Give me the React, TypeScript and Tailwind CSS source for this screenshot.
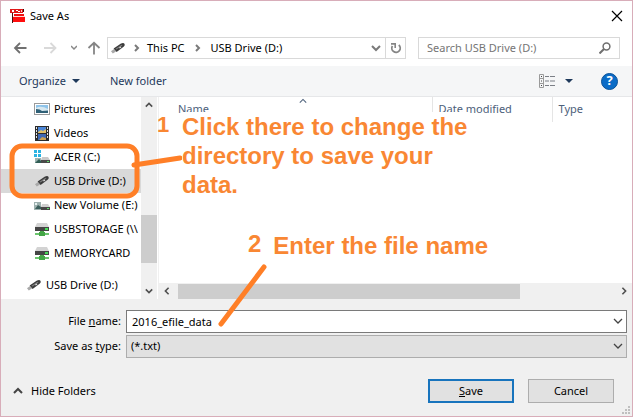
import React, { useState } from 'react';

interface IconProps {
  className?: string;
}

interface TreeItem {
  id: string;
  label: string;
  icon: React.FC<IconProps>;
  root?: boolean;
}

const AppIcon: React.FC<IconProps> = ({ className }) => (
  <svg className={className} width="16" height="16" viewBox="0 0 16 16" aria-hidden="true">
    <path d="M3 4h1v11H3z" fill="#4a0d0d" />
    <path d="M1 1h13v4H1z" fill="#e01818" />
    <path d="M3 2h2v2H3zM7 2h2v1H7zM9 3h2v1H9z" fill="#fff" />
    <path d="M12 2h1v2h-1z" fill="#f9c9c9" />
    <path d="M14 1h1v3h-1z" fill="#3a0808" />
    <path d="M5 6h10v2H5z" fill="#f01010" />
    <path d="M4 8h12v1H4z" fill="#ffd9d9" />
    <path d="M4 9h12v5H4z" fill="#ff0d0d" />
  </svg>
);

const UsbIcon: React.FC<IconProps> = ({ className }) => (
  <svg className={className} width="16" height="16" viewBox="0 0 16 16" aria-hidden="true">
    <path d="M1 11.2 4 9l2 2.6-3.2 1.8z" fill="#a9a9a9" />
    <path d="M3.6 8.6 11 3.6q2.6-1.2 3.6.4.6 1.6-1 2.8L6.6 12z" fill="#3b3b3b" />
    <path d="M5.5 8.8 11.5 4.8l1 .6-6 4z" fill="#7d7d7d" />
    <path d="m9 7.4 1.6-1 .8 1-1.6 1z" fill="#d8d8d8" />
  </svg>
);

const PicturesIcon: React.FC<IconProps> = ({ className }) => (
  <svg className={className} width="16" height="16" viewBox="0 0 16 16" aria-hidden="true">
    <rect x=".5" y="2.5" width="15" height="11" fill="#fff" stroke="#9a9a9a" />
    <path d="M2 4h12v5H2z" fill="#8fc4ea" />
    <path d="M2 7q5-3 12 1v2H2z" fill="#d7e8f0" />
    <path d="M2 8q4 0 6 2l6-.6V12H2z" fill="#2f6076" />
  </svg>
);

const VideosIcon: React.FC<IconProps> = ({ className }) => (
  <svg className={className} width="16" height="16" viewBox="0 0 16 16" aria-hidden="true">
    <rect x="1" y="1" width="14" height="15" fill="#2c2c2c" />
    <path d="M4 2h8v6H4z" fill="#4b86d8" />
    <path d="M4 9h8v6H4z" fill="#3e68b3" />
    <path d="M4 7l3-2 2 1 3-2v4H4z" fill="#dfc06a" />
    <path d="M5 15l3-3 4 1v2z" fill="#c9a052" />
    <path
      d="M2 2h1v2H2zM2 5h1v2H2zM2 8h1v2H2zM2 11h1v2H2zM13 2h1v2h-1zM13 5h1v2h-1zM13 8h1v2h-1zM13 11h1v2h-1z"
      fill="#e4e4e4"
    />
  </svg>
);

const SystemDriveIcon: React.FC<IconProps> = ({ className }) => (
  <svg className={className} width="16" height="16" viewBox="0 0 16 16" aria-hidden="true">
    <path d="M0 1h3v3H0zM4 1h3v3H4zM0 5h3v3H0zM4 5h3v3H4z" fill="#2bb3e2" />
    <path d="M1 9h6v5H1z" fill="#9db4b2" />
    <path d="m1 14 4-4 2 2v2z" fill="#315e55" />
    <path d="M8 8h6l2 3H7z" fill="#c9c9c9" />
    <path d="M7 11h9v3H7z" fill="#4a4a4a" />
    <path d="M13 12h2v1h-2z" fill="#5fe06c" />
  </svg>
);

const VolumeIcon: React.FC<IconProps> = ({ className }) => (
  <svg className={className} width="16" height="16" viewBox="0 0 16 16" aria-hidden="true">
    <path d="M0 5h7v8H0z" fill="#9db0ae" />
    <path d="m1 12 3-4 3 2v2z" fill="#3c5f5c" />
    <path d="M1 6h2v2H1z" fill="#e8f1f1" />
    <path d="M8 7h6l2 3H7z" fill="#cfcfcf" />
    <path d="M7 10h9v3H7z" fill="#474747" />
    <path d="M13 11h2v1h-2z" fill="#5fe06c" />
  </svg>
);

const NetworkDriveIcon: React.FC<IconProps> = ({ className }) => (
  <svg className={className} width="16" height="16" viewBox="0 0 16 16" aria-hidden="true">
    <path d="M3 2h10l2 4H1z" fill="#d3d3d3" />
    <path d="M1 6h14v4H1z" fill="#454545" />
    <path d="M11 7h3v2h-3z" fill="#46dc58" />
    <path d="M6 10h4v2H6z" fill="#49a64b" />
    <path d="M1 12h14v2H1z" fill="#6cc46e" />
    <path d="M5 11h6v4H5z" fill="#43a646" />
  </svg>
);

const Chevron: React.FC<IconProps & { d: string; thick?: boolean }> = ({ className, d, thick }) => (
  <svg
    className={className}
    width="10"
    height="10"
    viewBox="0 0 10 10"
    fill="none"
    stroke="currentColor"
    strokeWidth={thick ? 2 : 1.3}
    aria-hidden="true"
  >
    <path d={d} />
  </svg>
);

const UP = 'M1 7l4-4 4 4';
const DOWN = 'M1 3l4 4 4-4';
const LEFT = 'M7 1L3 5l4 4';
const RIGHT = 'M3 1l4 4-4 4';
const CRUMB = 'M3 2l3 3-3 3';

const Caret: React.FC = () => (
  <svg width="8" height="4" viewBox="0 0 8 4" fill="#1e395b" aria-hidden="true">
    <path d="M0 0h8L4 4z" />
  </svg>
);

const treeItems: TreeItem[] = [
  { id: 'pictures', label: 'Pictures', icon: PicturesIcon },
  { id: 'videos', label: 'Videos', icon: VideosIcon },
  { id: 'c', label: 'ACER (C:)', icon: SystemDriveIcon },
  { id: 'd', label: 'USB Drive (D:)', icon: UsbIcon },
  { id: 'e', label: 'New Volume (E:)', icon: VolumeIcon },
  { id: 'usbstorage', label: 'USBSTORAGE (\\\\', icon: NetworkDriveIcon },
  { id: 'memorycard', label: 'MEMORYCARD', icon: NetworkDriveIcon },
  { id: 'usb', label: 'USB Drive (D:)', icon: UsbIcon, root: true },
];

const TitleBar: React.FC = () => (
  <header className="flex h-[30px] items-center bg-white pl-2 pr-[9px]">
    <AppIcon />
    <h1 className="ml-[5px] flex-1">Save As</h1>
    <button type="button" aria-label="Close">
      <svg width="12" height="12" viewBox="0 0 12 12" stroke="#000" strokeWidth="1.2" aria-hidden="true">
        <path d="M1 1l10 10M11 1L1 11" />
      </svg>
    </button>
  </header>
);

const NavigationBar: React.FC = () => (
  <nav className="flex items-center bg-white pb-[7px] pl-3 pr-3 pt-1.5 text-[#7a7a7a]">
    <button type="button" aria-label="Back">
      <svg width="14" height="14" viewBox="0 0 14 14" fill="none" stroke="#707070" strokeWidth="1.8" aria-hidden="true">
        <path d="M13.5 7H2M7 2L2 7l5 5" />
      </svg>
    </button>
    <button type="button" aria-label="Forward" className="ml-4">
      <svg width="14" height="14" viewBox="0 0 14 14" fill="none" stroke="#d9d9d9" strokeWidth="1.8" aria-hidden="true">
        <path d="M1 7h11.5M7.5 2l5 5-5 5" />
      </svg>
    </button>
    <button type="button" aria-label="Recent locations" className="ml-3.5">
      <svg width="6" height="6" viewBox="0 0 6 6" fill="none" stroke="#888" strokeWidth="1.5" aria-hidden="true">
        <path d="M0 1l3 3 3-3" />
      </svg>
    </button>
    <button type="button" aria-label="Up" className="ml-2.5">
      <svg width="14" height="14" viewBox="0 0 14 14" fill="none" stroke="#858585" strokeWidth="1.8" aria-hidden="true">
        <path d="M7 13.5V2M1.5 7L7 1.8 12.5 7" />
      </svg>
    </button>
    <div className="ml-1.5 flex h-[22px] flex-1 items-center border border-[#d9d9d9]">
      <UsbIcon className="ml-0.5" />
      <Chevron d={CRUMB} thick className="ml-1.5" />
      <button type="button" className="ml-[5px] text-black">
        This PC
      </button>
      <Chevron d={CRUMB} thick className="ml-2" />
      <button type="button" className="ml-2 text-black">
        USB Drive (D:)
      </button>
      <button type="button" aria-label="Previous locations" className="ml-auto mr-1">
        <Chevron d={DOWN} thick />
      </button>
      <button
        type="button"
        aria-label="Refresh"
        className="flex h-full w-5 items-center justify-center border-l border-[#d9d9d9]"
      >
        <svg width="12" height="12" viewBox="0 0 12 12" fill="none" stroke="#858585" strokeWidth="1.8" aria-hidden="true">
          <path d="M8.8 3a4.2 4.2 0 1 1-6.4 1" />
          <path d="M1 1.9h4.2V6" strokeWidth="1.6" />
        </svg>
      </button>
    </div>
    <label className="ml-3 flex h-[22px] w-[202px] items-center border border-[#d9d9d9] pl-2 pr-2">
      <input
        type="search"
        aria-label="Search"
        placeholder="Search USB Drive (D:)"
        className="min-w-0 flex-1 outline-none placeholder:text-[#757575]"
      />
      <svg width="12" height="12" viewBox="0 0 12 12" fill="none" stroke="#6f6f6f" aria-hidden="true">
        <circle cx="7.5" cy="4.5" r="3.4" strokeWidth="1.5" />
        <path d="M5 7l-4.5 4.5" strokeWidth="2" />
      </svg>
    </label>
  </nav>
);

const Toolbar: React.FC = () => (
  <div className="flex h-[31px] items-center border-b border-[#e6e7e9] bg-[#f5f6f7] pl-[18px] pr-3.5 text-[#1e395b]">
    <button type="button" className="flex items-center gap-1.5">
      Organize
      <Caret />
    </button>
    <button type="button" className="ml-[30px]">
      New folder
    </button>
    <button type="button" aria-label="Change your view" className="ml-auto flex items-center gap-2.5">
      <svg width="16" height="14" viewBox="0 0 16 14" fill="none" aria-hidden="true">
        <path d="M.5.5h4v13h-4zM.5 4.5h4M.5 9.5h4" stroke="#9a9a9a" />
        <path d="M2 2h1v1H2zM2 6.5h1v1H2zM2 11h1v1H2z" fill="#444" />
        <path d="M6 2.5h4M11 2.5h5M6 7h4M11 7h5M6 11.5h4M11 11.5h5" stroke="#7b7f86" />
      </svg>
      <Caret />
    </button>
    <button
      type="button"
      aria-label="Help"
      className="ml-7 flex size-[17px] items-center justify-center rounded-full border border-[#0a5298] bg-[#0b6cc7] text-[13px] font-bold text-white"
    >
      ?
    </button>
  </div>
);

interface FolderTreeProps {
  selected: string;
  onSelect: (id: string) => void;
}

const FolderTree: React.FC<FolderTreeProps> = ({ selected, onSelect }) => (
  <aside className="flex w-[158px] shrink-0 border-r border-[#f0f0f0] bg-white">
    <ul className="w-[140px] overflow-hidden whitespace-nowrap pb-0.5">
      {treeItems.map(({ id, label, icon: Icon, root }) => (
        <li key={id} className={root ? 'mt-2' : ''}>
          <button
            type="button"
            onClick={() => onSelect(id)}
            className={`flex h-6 w-full items-center gap-1 ${root ? 'pl-[25px]' : 'pl-[33px]'} ${
              selected === id ? 'bg-[#d9d9d9]' : ''
            }`}
          >
            <Icon className="shrink-0" />
            {label}
          </button>
        </li>
      ))}
    </ul>
    <div className="flex w-4 flex-col items-center bg-[#f0f0f0] text-[#505050]">
      <Chevron d={UP} thick className="mt-1 size-2" />
      <div className="mt-auto h-12 w-full bg-[#cdcdcd]" />
      <Chevron d={DOWN} thick className="mb-1 mt-6 size-2" />
    </div>
  </aside>
);

const FileList: React.FC = () => (
  <section className="relative flex min-w-0 flex-1 flex-col bg-white">
    <table className="w-full table-fixed text-left text-[#4c607a]">
      <thead>
        <tr className="h-[25px]">
          <th className="relative pl-[19px] font-normal">
            Name
            <Chevron d={UP} className="absolute left-1/2 top-0 ml-1 size-2" />
          </th>
          <th className="w-[120px] border-l border-[#e5e5e5] pl-1.5 font-normal">Date modified</th>
          <th className="w-20 border-l border-[#e5e5e5] pl-1.5 font-normal">Type</th>
        </tr>
      </thead>
    </table>
    <div className="mt-auto flex h-4 items-center bg-[#f0f0f0] pl-1 pr-1 text-[#505050]">
      <Chevron d={LEFT} thick className="size-2" />
      <div className="ml-[7px] mr-[100px] h-[15px] flex-1 bg-[#cdcdcd]" />
      <Chevron d={RIGHT} thick className="size-2" />
    </div>
  </section>
);

const Annotations: React.FC = () => (
  <div className="pointer-events-none absolute left-0 top-0 font-['Liberation_Sans',sans-serif] font-bold text-[#f98733]">
    <div className="absolute left-[156px] top-[111px] flex w-[312px] text-2xl leading-[29px]">
      <span className="w-[25px] shrink-0 text-[22px] leading-[26px]">1</span>
      <p className="flex-1 bg-white">
        <span className="block whitespace-nowrap">Click there to change the</span>
        <span className="block whitespace-nowrap">directory to save your</span>
        <span className="block whitespace-nowrap">data.</span>
      </p>
    </div>
    <div className="absolute left-[247px] top-[230px] flex gap-3 whitespace-nowrap text-2xl leading-[29px]">
      <span className="leading-[26px]">2</span>
      <p>Enter the file name</p>
    </div>
    <svg width="300" height="340" viewBox="0 0 300 340" fill="none" stroke="#ff7f27" strokeWidth="5" aria-hidden="true">
      <rect x="11" y="145" width="125" height="50" rx="10" />
      <path d="M133 164l46-7M263 266l-43 57" strokeLinecap="round" />
    </svg>
  </div>
);

export default function App() {
  const [selected, setSelected] = useState('d');
  const [fileName, setFileName] = useState('2016_efile_data');

  return (
    <main className="relative flex min-h-screen flex-col border border-[#d8adb9] bg-[#f0f0f0] font-['Noto_Sans',sans-serif] text-[11px] text-black">
      <TitleBar />
      <NavigationBar />
      <Toolbar />
      <div className="flex">
        <FolderTree selected={selected} onSelect={setSelected} />
        <FileList />
      </div>

      <form className="flex flex-col" onSubmit={(e) => e.preventDefault()}>
        <div className="grid grid-cols-[120px_1fr] items-center gap-x-[5px] gap-y-0.5 pr-[5px] pt-[11px]">
          <label htmlFor="fileName" className="text-right">
            File <u>n</u>ame:
          </label>
          <div className="relative">
            <input
              id="fileName"
              type="text"
              value={fileName}
              onChange={(e) => setFileName(e.target.value)}
              className="h-[23px] w-full border border-[#7a7a7a] bg-white pl-[5px] pr-6 outline-none"
            />
            <Chevron d={DOWN} className="absolute right-1 top-1.5 text-[#444]" />
          </div>
          <label htmlFor="fileType" className="text-right">
            Save as <u>t</u>ype:
          </label>
          <div className="relative">
            <select
              id="fileType"
              className="h-[23px] w-full appearance-none border border-[#adadad] bg-[#e1e1e1] pl-1 pr-6 outline-none"
            >
              <option>(*.txt)</option>
            </select>
            <Chevron d={DOWN} className="pointer-events-none absolute right-1 top-1.5 text-[#444]" />
          </div>
        </div>

        <div className="flex items-center pb-[13px] pl-3 pr-[18px] pt-[21px]">
          <button type="button" className="flex items-center gap-2">
            <Chevron d={UP} thick className="text-[#444]" />
            Hide Folders
          </button>
          <button type="submit" className="ml-auto h-6 w-[86px] border-2 border-[#1874bd] bg-[#e1e1e1]">
            <u>S</u>ave
          </button>
          <button type="button" className="ml-3.5 h-6 w-[86px] border border-[#adadad] bg-[#e1e1e1]">
            Cancel
          </button>
        </div>
      </form>

      <svg
        className="absolute bottom-0.5 right-0.5"
        width="8"
        height="8"
        viewBox="0 0 8 8"
        fill="#bfbfbf"
        aria-hidden="true"
      >
        <path d="M6 0h2v2H6zM3 3h2v2H3zM6 3h2v2H6zM0 6h2v2H0zM3 6h2v2H3zM6 6h2v2H6z" />
      </svg>
      <Annotations />
    </main>
  );
}
